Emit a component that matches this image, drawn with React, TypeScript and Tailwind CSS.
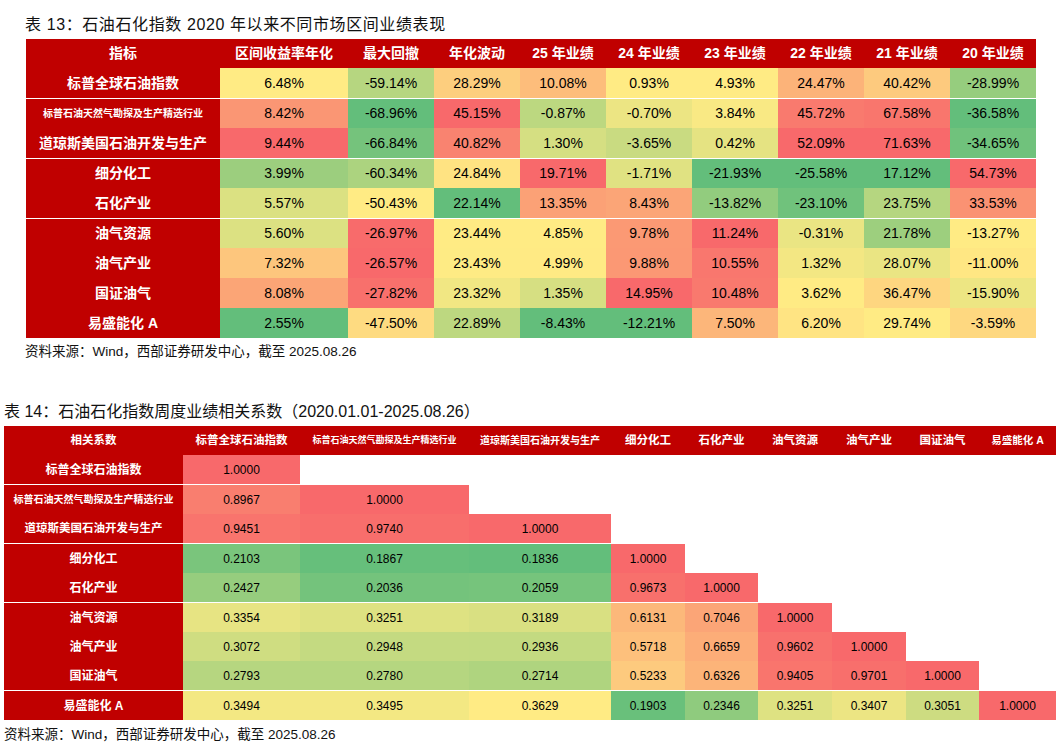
import React from "react";

type RGB = [number, number, number];

const GREEN: RGB = [99, 190, 123];
const YELLOW: RGB = [255, 235, 132];
const RED: RGB = [248, 105, 107];

function mix(a: RGB, b: RGB, t: number): string {
  const c = a.map((x, i) => Math.round(x + (b[i] - x) * t));
  return `rgb(${c[0]}, ${c[1]}, ${c[2]})`;
}

function median(vals: number[]) {
  const s = [...vals].sort((a, b) => a - b);
  const pos = (s.length - 1) / 2;
  const lo = Math.floor(pos);
  const hi = Math.ceil(pos);
  return s[lo] + (s[hi] - s[lo]) * (pos - lo);
}

// excel style 3-colour scale: min green, median yellow, max red
function makeScale(vals: number[]) {
  const min = Math.min(...vals);
  const max = Math.max(...vals);
  const mid = median(vals);
  return (v: number) => {
    if (v <= mid) return mix(GREEN, YELLOW, mid === min ? 1 : (v - min) / (mid - min));
    return mix(YELLOW, RED, max === mid ? 0 : (v - mid) / (max - mid));
  };
}

const FONT = "font-['Liberation_Sans','Noto_Sans_CJK_SC',sans-serif]";

const perfHeaders = [
  "指标",
  "区间收益率年化",
  "最大回撤",
  "年化波动",
  "25 年业绩",
  "24 年业绩",
  "23 年业绩",
  "22 年业绩",
  "21 年业绩",
  "20 年业绩",
];

const perfRows: { name: string; size: string; vals: number[] }[] = [
  { name: "标普全球石油指数", size: "text-[14px]", vals: [6.48, -59.14, 28.29, 10.08, 0.93, 4.93, 24.47, 40.42, -28.99] },
  { name: "标普石油天然气勘探及生产精选行业", size: "text-[10px]", vals: [8.42, -68.96, 45.15, -0.87, -0.7, 3.84, 45.72, 67.58, -36.58] },
  { name: "道琼斯美国石油开发与生产", size: "text-[14px]", vals: [9.44, -66.84, 40.82, 1.3, -3.65, 0.42, 52.09, 71.63, -34.65] },
  { name: "细分化工", size: "text-[14px]", vals: [3.99, -60.34, 24.84, 19.71, -1.71, -21.93, -25.58, 17.12, 54.73] },
  { name: "石化产业", size: "text-[14px]", vals: [5.57, -50.43, 22.14, 13.35, 8.43, -13.82, -23.1, 23.75, 33.53] },
  { name: "油气资源", size: "text-[14px]", vals: [5.6, -26.97, 23.44, 4.85, 9.78, 11.24, -0.31, 21.78, -13.27] },
  { name: "油气产业", size: "text-[14px]", vals: [7.32, -26.57, 23.43, 4.99, 9.88, 10.55, 1.32, 28.07, -11.0] },
  { name: "国证油气", size: "text-[14px]", vals: [8.08, -27.82, 23.32, 1.35, 14.95, 10.48, 3.62, 36.47, -15.9] },
  { name: "易盛能化 A", size: "text-[14px]", vals: [2.55, -47.5, 22.89, -8.43, -12.21, 7.5, 6.2, 29.74, -3.59] },
];

const perfScales = perfRows[0].vals.map((_, c) => makeScale(perfRows.map((r) => r.vals[c])));

const corrHeaders: { name: string; size: string }[] = [
  { name: "相关系数", size: "text-[11.5px]" },
  { name: "标普全球石油指数", size: "text-[11.5px]" },
  { name: "标普石油天然气勘探及生产精选行业", size: "text-[9px]" },
  { name: "道琼斯美国石油开发与生产", size: "text-[10px]" },
  { name: "细分化工", size: "text-[11.5px]" },
  { name: "石化产业", size: "text-[11.5px]" },
  { name: "油气资源", size: "text-[11.5px]" },
  { name: "油气产业", size: "text-[11.5px]" },
  { name: "国证油气", size: "text-[11.5px]" },
  { name: "易盛能化 A", size: "text-[10.5px]" },
];

const corrRows: { name: string; size: string; vals: number[] }[] = [
  { name: "标普全球石油指数", size: "text-[12px]", vals: [1] },
  { name: "标普石油天然气勘探及生产精选行业", size: "text-[10px]", vals: [0.8967, 1] },
  { name: "道琼斯美国石油开发与生产", size: "text-[11.5px]", vals: [0.9451, 0.974, 1] },
  { name: "细分化工", size: "text-[12px]", vals: [0.2103, 0.1867, 0.1836, 1] },
  { name: "石化产业", size: "text-[12px]", vals: [0.2427, 0.2036, 0.2059, 0.9673, 1] },
  { name: "油气资源", size: "text-[12px]", vals: [0.3354, 0.3251, 0.3189, 0.6131, 0.7046, 1] },
  { name: "油气产业", size: "text-[12px]", vals: [0.3072, 0.2948, 0.2936, 0.5718, 0.6659, 0.9602, 1] },
  { name: "国证油气", size: "text-[12px]", vals: [0.2793, 0.278, 0.2714, 0.5233, 0.6326, 0.9405, 0.9701, 1] },
  { name: "易盛能化 A", size: "text-[12px]", vals: [0.3494, 0.3495, 0.3629, 0.1903, 0.2346, 0.3251, 0.3407, 0.3051, 1] },
];

const corrScale = makeScale(corrRows.flatMap((r) => r.vals));

const PERF_COLS = "grid-cols-[194px_128px_86px_86px_86px_86px_86px_86px_86px_86px]";
const CORR_COLS = "grid-cols-[179px_117px_169px_142px_74px_73px_74px_74px_73px_77px]";

function PerfTable() {
  return (
    <div className="ml-[26px] mt-[4px] w-[1010px]">
      <div className={`grid ${PERF_COLS} h-[29px] bg-[#c00000]`}>
        {perfHeaders.map((h) => (
          <div key={h} className="flex items-center justify-center text-[14px] font-bold text-white">
            {h}
          </div>
        ))}
      </div>
      {perfRows.map((row, i) => (
        <div
          key={row.name}
          className={`grid ${PERF_COLS} h-[30px] ${
            i === 1 || i === 3 || i === 5 ? "border-t border-white" : ""
          }`}
        >
          <div className={`flex items-center justify-center bg-[#c00000] font-bold text-white ${row.size}`}>
            {row.name}
          </div>
          {row.vals.map((v, c) => (
            <div
              key={c}
              className="flex items-center justify-center text-[14px] text-black"
              style={{ backgroundColor: perfScales[c](v) }}
            >
              {v.toFixed(2)}%
            </div>
          ))}
        </div>
      ))}
    </div>
  );
}

function CorrTable() {
  return (
    <div className="ml-[4px] mt-[4px] w-[1052px]">
      <div className={`grid ${CORR_COLS} h-[29px] bg-[#c00000]`}>
        {corrHeaders.map((h) => (
          <div key={h.name} className={`flex items-center justify-center font-bold text-white ${h.size}`}>
            {h.name}
          </div>
        ))}
      </div>
      {corrRows.map((row, i) => {
        const sep = i === 1 || i === 3 || i === 5 || i === 8;
        return (
          <div
            key={row.name}
            className={`grid ${CORR_COLS} ${sep ? "h-[30px] border-t border-white" : "h-[29px]"}`}
          >
            <div className={`flex items-center justify-center bg-[#c00000] font-bold text-white ${row.size}`}>
              {row.name}
            </div>
            {corrRows.map((_, c) =>
              c < row.vals.length ? (
                <div
                  key={c}
                  className="flex items-center justify-center text-[12px] text-black"
                  style={{ backgroundColor: corrScale(row.vals[c]) }}
                >
                  {row.vals[c].toFixed(4)}
                </div>
              ) : (
                <div key={c} className="bg-white" />
              ),
            )}
          </div>
        );
      })}
    </div>
  );
}

export default function App() {
  return (
    <div className={`h-[756px] w-[1059px] overflow-hidden bg-white text-[#111] ${FONT}`}>
      <h2 className="ml-[25px] pt-[15px] text-[16px] leading-[20px] tracking-[0.6px]">
        表 13：石油石化指数 2020 年以来不同市场区间业绩表现
      </h2>
      <PerfTable />
      <p className="ml-[25px] mt-[5px] text-[13.5px] leading-[18px]">
        资料来源：Wind，西部证券研发中心，截至 2025.08.26
      </p>
      <h2 className="ml-[4px] mt-[41px] text-[16px] leading-[20px]">
        表 14：石油石化指数周度业绩相关系数（2020.01.01-2025.08.26）
      </h2>
      <CorrTable />
      <p className="ml-[4px] mt-[6px] text-[13.5px] leading-[18px]">
        资料来源：Wind，西部证券研发中心，截至 2025.08.26
      </p>
    </div>
  );
}
